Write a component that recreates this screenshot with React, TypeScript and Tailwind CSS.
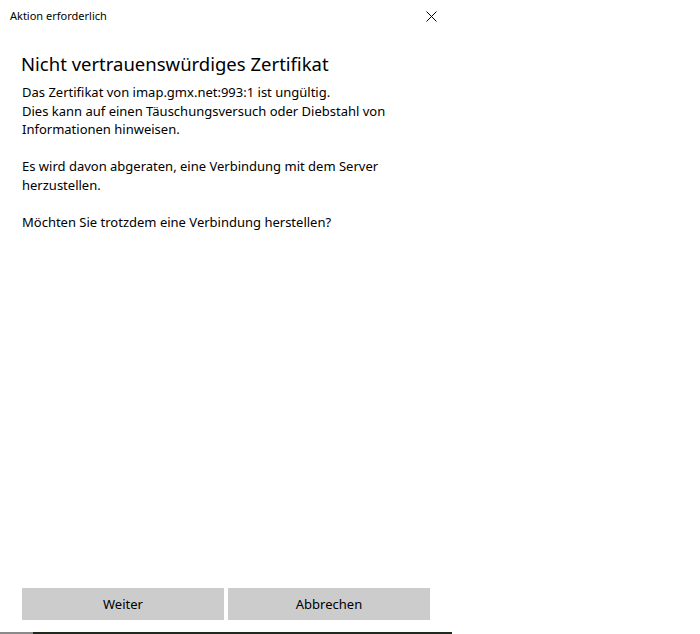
export default function App() {
  return (
    <div className="h-[634px] w-[700px] overflow-hidden bg-white text-black" style={{ fontFamily: '"Noto Sans", sans-serif' }}>
      <div className="flex h-[634px] w-[452px] flex-col">
        <div className="flex h-[32px] items-center justify-between pl-[10px] pr-[15px]">
          <span className="text-[11px]">Aktion erforderlich</span>
          <svg width="11" height="11" viewBox="0 0 11 11" className="block">
            <path d="M0.5 0.5 L10.5 10.5 M10.5 0.5 L0.5 10.5" stroke="#000" strokeWidth="1" />
          </svg>
        </div>
        <div className="flex flex-1 flex-col px-[22px]">
          <h1 className="ml-[-1px] mt-[19px] text-[18.5px] leading-[26px]">Nicht vertrauenswürdiges Zertifikat</h1>
          <div className="mt-[6px] text-[13px] leading-[18.5px]">
            <p>Das Zertifikat von imap.gmx.net:993:1 ist ungültig.</p>
            <p>Dies kann auf einen Täuschungsversuch oder Diebstahl von Informationen hinweisen.</p>
            <p className="mt-[18.5px]">Es wird davon abgeraten, eine Verbindung mit dem Server herzustellen.</p>
            <p className="mt-[18.5px]">Möchten Sie trotzdem eine Verbindung herstellen?</p>
          </div>
          <div className="mt-auto mb-[12px] flex gap-[4px]">
            <button className="h-[32px] w-[202px] bg-[#cccccc] pt-[2px] text-[13px]">Weiter</button>
            <button className="h-[32px] w-[202px] bg-[#cccccc] pt-[2px] text-[13px]">Abbrechen</button>
          </div>
        </div>
        <div className="flex h-[2px]">
          <div className="w-[33px] bg-[#8a8a8a]" />
          <div className="flex-1 bg-[#1f2a1c]" />
        </div>
      </div>
    </div>
  );
}
